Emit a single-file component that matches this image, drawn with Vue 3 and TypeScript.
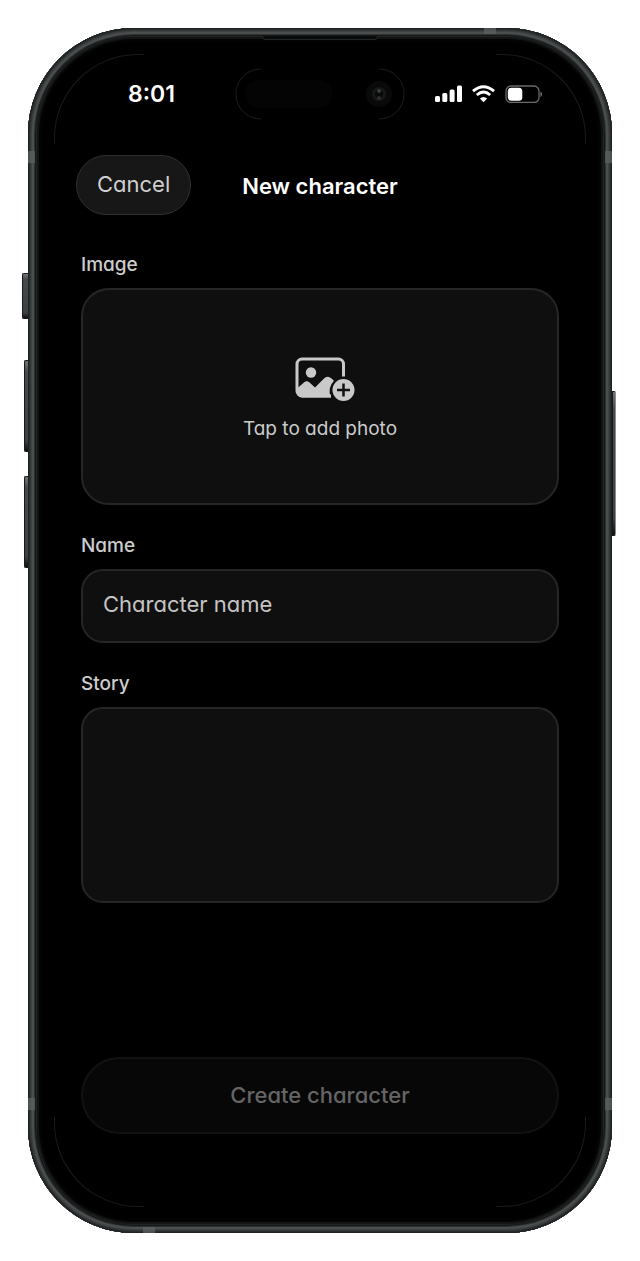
<script setup lang="ts">
import { ref } from 'vue'

const name = ref('')
const story = ref('')
const corners: string[] = ['tl', 'tr', 'bl', 'br']
const bands: string[] = ['upper-left', 'upper-right', 'lower-left', 'lower-right', 'top', 'bottom']
const keys: string[] = ['action', 'volume-up', 'volume-down', 'power']
</script>

<template>
  <div class="stage">
    <main class="phone">
      <span v-for="k in keys" :key="k" class="key" :class="k" aria-hidden="true"></span>
      <span v-for="b in bands" :key="b" class="band" :class="b" aria-hidden="true"></span>
      <span v-for="c in corners" :key="c" class="corner" :class="c" aria-hidden="true"></span>
      <span class="earpiece" aria-hidden="true"></span>

      <div class="status">
        <time class="clock">8:01</time>
        <svg class="island" width="170" height="52" viewBox="0 0 170 52" aria-hidden="true">
          <path d="M26 1C12 1 1 12 1 26s11 25 25 25M144 1c14 0 25 11 25 25s-11 25-25 25" fill="none" stroke="#1e1e1e" />
          <rect x="11" y="12" width="86" height="28" rx="12" fill="#040404" />
          <circle cx="144" cy="26" r="13" fill="#090909" />
          <circle cx="144" cy="26" r="7" fill="#171818" />
          <circle cx="144" cy="26" r="4" fill="#080909" />
          <circle cx="144" cy="23" r="2" fill="#3a3b3b" />
          <circle cx="144" cy="30" r="2" fill="#2b2c2c" />
        </svg>
        <div class="indicators">
          <svg width="27" height="18" viewBox="0 0 27 18" fill="#fff" aria-hidden="true">
            <rect x="0" y="11" width="5" height="6" rx="1.5" />
            <rect x="7.3" y="8" width="5" height="9" rx="1.5" />
            <rect x="14.6" y="4.500" width="5" height="12.500" rx="1.500" />
            <rect x="22" y="0.500" width="5" height="16.500" rx="1.500" />
          </svg>
          <svg width="23" height="18" viewBox="0 0 23 18" fill="none" stroke="#fff" aria-hidden="true">
            <path d="M1 6.200Q11.500-2.800 22 6.200" stroke-width="3" />
            <path d="M4.800 10Q11.500 4 18.200 10" stroke-width="2.800" />
            <path d="M11.500 17.200 7.900 13.500Q11.500 10.300 15.100 13.500Z" fill="#fff" stroke="none" />
          </svg>
          <svg width="38" height="18" viewBox="0 0 38 18" aria-hidden="true">
            <rect x="1" y="1" width="33" height="16.500" rx="5" fill="none" stroke="#6a6a6a" stroke-width="1.300" />
            <rect x="2.800" y="2.800" width="14.500" height="13" rx="3.500" fill="#fff" />
            <path d="M35.500 6.500c2 1 2 4.500 0 5.500z" fill="#777" />
          </svg>
        </div>
      </div>

      <header class="header">
        <button type="button" class="cancel">Cancel</button>
        <h1 class="title">New character</h1>
      </header>

      <form class="form" @submit.prevent>
        <div class="field">
          <span id="image-label" class="label">Image</span>
          <button type="button" class="box photo" aria-describedby="image-label">
            <svg width="69" height="46" viewBox="-9 0 69 46" aria-hidden="true">
              <path d="M48.500 19.500V7a5 5 0 0 0-5-5H7a5 5 0 0 0-5 5v27a5 5 0 0 0 5 5h29" fill="none" stroke="#c9c9c9" stroke-width="3" />
              <circle cx="16" cy="15.500" r="5.200" fill="#c9c9c9" />
              <path d="M2 31.500 9.500 25q2.500-1.500 5 .5l5.500 5 8.500-8.500q4-4 8-.5l2.500 2.200A14.500 14.500 0 0 0 36 40.500H7a5 5 0 0 1-5-5z" fill="#c9c9c9" />
              <circle cx="48.500" cy="33" r="11" fill="#c9c9c9" />
              <path d="M48.500 26.500v13M42 33h13" stroke="#111" stroke-width="2.500" />
            </svg>
            <span>Tap to add photo</span>
          </button>
        </div>
        <div class="field">
          <label class="label" for="name">Name</label>
          <input id="name" v-model="name" class="box name" type="text" placeholder="Character name" />
        </div>
        <div class="field">
          <label class="label" for="story">Story</label>
          <textarea id="story" v-model="story" class="box story"></textarea>
        </div>
        <button type="submit" class="create" disabled>Create character</button>
      </form>
    </main>
  </div>
</template>

<style>
body {
  margin: 0;
  background: #fff;
}
</style>

<style scoped>
.stage {
  box-sizing: border-box;
  min-height: 100vh;
  padding: 28px;
  display: flex;
  font-family: Inter, "Liberation Sans", sans-serif;
  font-feature-settings: "cv11" 1;
}
.stage *,
.stage *::before {
  box-sizing: border-box;
}
button,
input,
textarea {
  font: inherit;
  font-feature-settings: inherit;
}
.phone {
  position: relative;
  flex: 1;
  min-width: 0;
  display: flex;
  flex-direction: column;
  border-radius: 106px;
  background: #000;
  box-shadow:
    inset 0 0 0 1px #1f2222,
    inset 0 0 0 2px #2a2d2d,
    inset 0 0 0 3px #353838,
    inset 0 0 0 4px #404343,
    inset 0 0 0 6px #4a4e4e,
    inset 0 0 0 7px #303333,
    inset 0 0 0 8px #161818,
    inset 0 0 0 9px #222424,
    inset 0 0 0 11px #121313,
    inset 0 0 4px 12px #080808;
}
.key {
  position: absolute;
  width: 4px;
  height: 92px;
  left: -4px;
  border: 1px solid #171a1a;
  border-right: 0;
  border-radius: 2px 0 0 2px;
  background: linear-gradient(#727777, #454b4b 12%, #3c4242 88%, #0e1010);
}
.action {
  top: 245px;
  left: -6px;
  width: 6px;
  height: 46px;
}
.volume-up {
  top: 332px;
}
.volume-down {
  top: 448px;
}
.power {
  top: 363px;
  left: auto;
  right: -4px;
  height: 145px;
  border: 1px solid #171a1a;
  border-right-color: #8a8d8d;
  border-radius: 0 2px 2px 0;
}
.band {
  position: absolute;
  width: 7px;
  height: 12px;
  background: #5c6060;
  opacity: 0.75;
}
.upper-left {
  left: 0;
  top: 123px;
}
.upper-right {
  right: 0;
  top: 123px;
}
.lower-left {
  left: 0;
  bottom: 123px;
}
.lower-right {
  right: 0;
  bottom: 123px;
}
.top,
.bottom {
  width: 12px;
  height: 6px;
}
.top {
  top: 0;
  right: 116px;
}
.bottom {
  bottom: 0;
  left: 115px;
}
.corner {
  position: absolute;
  width: 90px;
  height: 90px;
  border: 0 solid #1b1b1b;
  pointer-events: none;
}
.tl {
  top: 26px;
  left: 26px;
  border-width: 1px 0 0 1px;
  border-top-left-radius: 84px;
}
.tr {
  top: 26px;
  right: 26px;
  border-width: 1px 1px 0 0;
  border-top-right-radius: 84px;
}
.bl {
  bottom: 26px;
  left: 26px;
  border-width: 0 0 1px 1px;
  border-bottom-left-radius: 84px;
}
.br {
  bottom: 26px;
  right: 26px;
  border-width: 0 1px 1px 0;
  border-bottom-right-radius: 84px;
}
.earpiece {
  position: absolute;
  top: 8px;
  left: 50%;
  width: 116px;
  height: 4px;
  margin-left: -58px;
  border: 1px solid #242727;
  border-top: 0;
  border-radius: 0 0 4px 4px;
  background: #0a0b0b;
}
.status {
  display: grid;
  grid-template-columns: 1fr 170px 1fr;
  align-items: center;
  padding: 40px 40px 0;
  color: #fff;
}
.clock {
  justify-self: center;
  font-size: 23px;
  line-height: 28px;
  font-weight: 600;
}
.island {
  display: block;
}
.indicators {
  display: flex;
  align-items: center;
  gap: 10px;
  justify-self: end;
  margin-right: 29px;
}
.indicators svg {
  display: block;
}
.header {
  display: grid;
  grid-template-columns: 1fr auto 1fr;
  align-items: center;
  padding: 35px 48px 0;
}
.cancel {
  justify-self: start;
  height: 60px;
  padding: 0 20px 2px;
  border: 1px solid #303030;
  border-radius: 30px;
  background: #171717;
  color: #cfcfcf;
  font-size: 22px;
  line-height: 28px;
}
.title {
  margin: 0;
  padding-top: 2px;
  color: #fff;
  font-size: 22px;
  line-height: 28px;
  font-weight: 600;
  font-feature-settings: normal;
}
.form {
  flex: 1;
  display: flex;
  flex-direction: column;
  gap: 29px;
  padding: 38px 53px 99px;
}
.field {
  display: flex;
  flex-direction: column;
  gap: 11px;
}
.label {
  color: #cdcdcd;
  font-size: 19px;
  line-height: 24px;
  font-weight: 500;
}
.box {
  display: block;
  width: 100%;
  margin: 0;
  border: 2px solid #262626;
  border-radius: 22px;
  background: #0f0f0f;
  color: #cbcbcb;
  outline: none;
}
.photo {
  height: 217px;
  padding: 4px 20px 0;
  display: flex;
  flex-direction: column;
  align-items: center;
  justify-content: center;
  gap: 14px;
  border-radius: 28px;
  font-size: 19px;
  line-height: 24px;
}
.name {
  height: 74px;
  padding: 0 20px 4px;
  font-size: 22px;
}
.name::placeholder {
  color: #c4c4c4;
  opacity: 1;
}
.story {
  height: 196px;
  padding: 20px;
  font-size: 22px;
  resize: none;
}
.create {
  height: 77px;
  margin-top: auto;
  padding: 0 20px 2px;
  border: 2px solid #121212;
  border-radius: 39px;
  background: #070707;
  color: #656565;
  font-size: 22px;
  line-height: 28px;
  font-weight: 500;
}
</style>
